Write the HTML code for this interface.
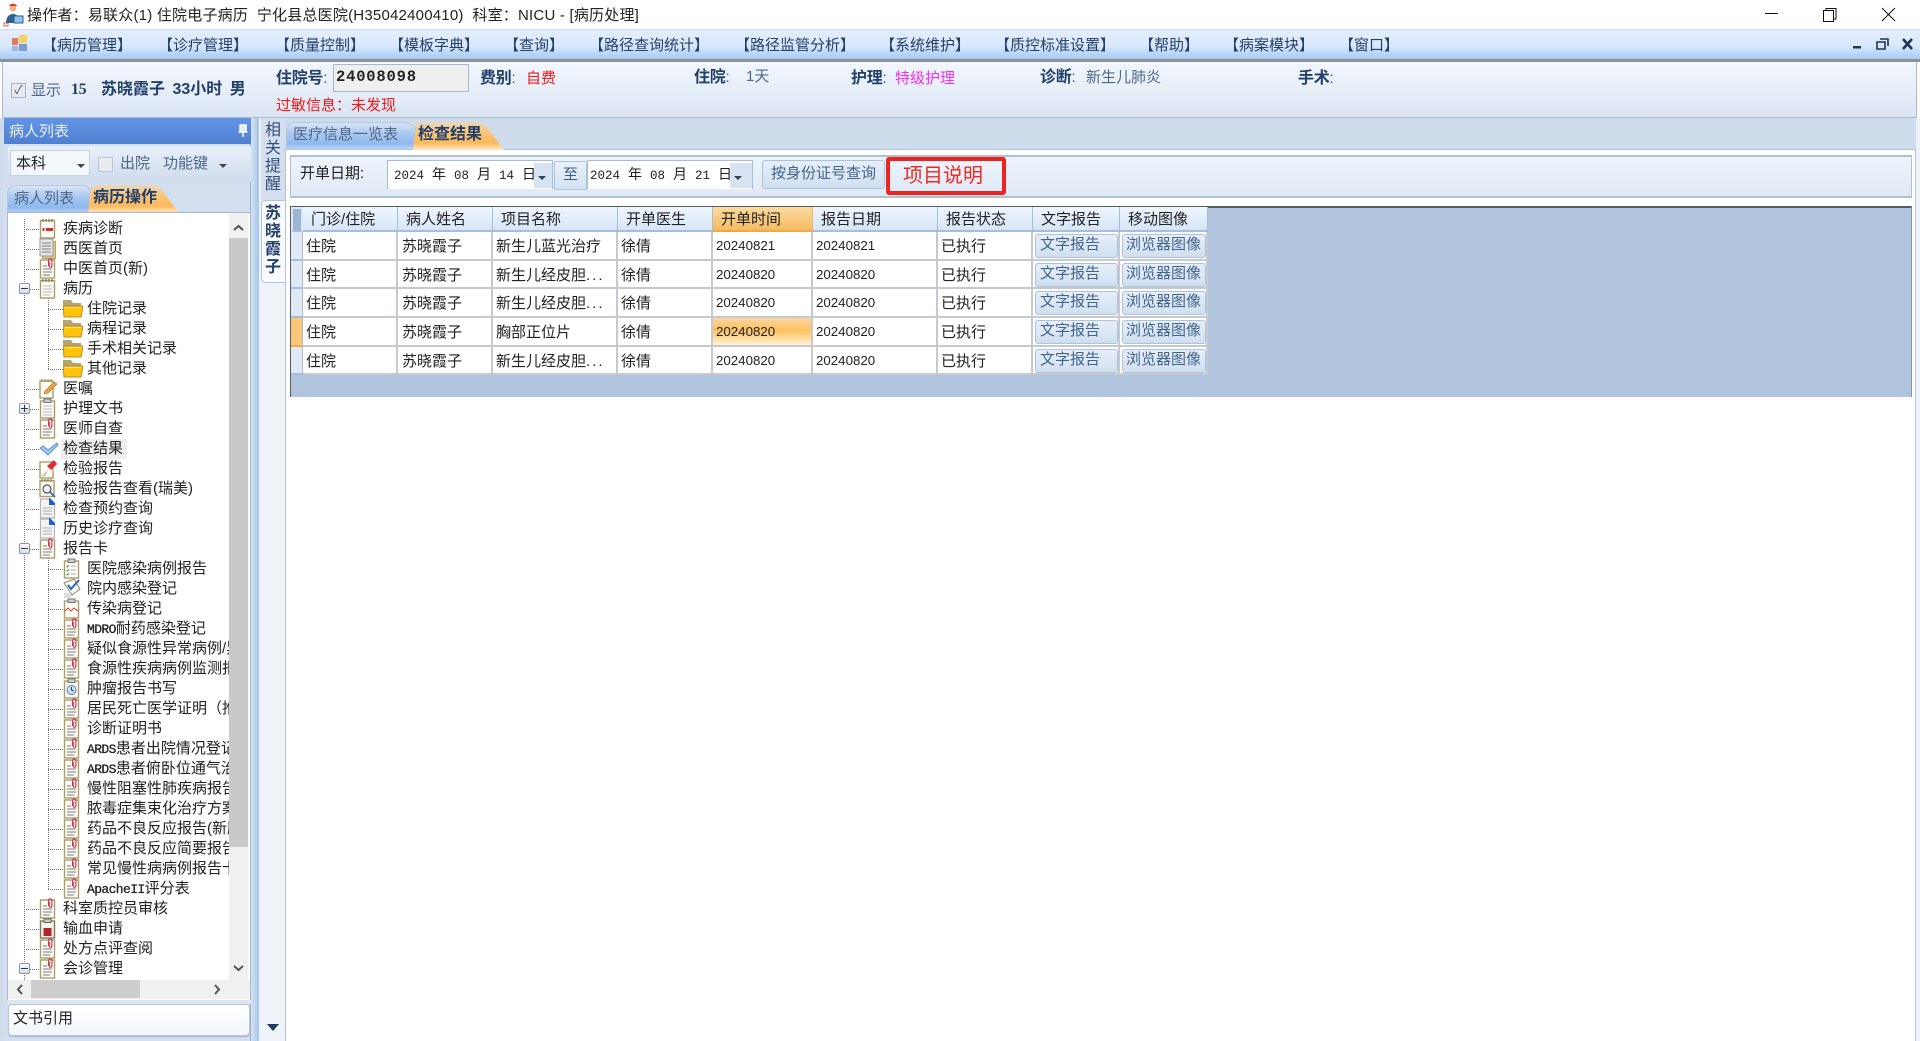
<!DOCTYPE html>
<html lang="zh-CN"><head><meta charset="utf-8"><title>病历处理</title>
<style>
html,body{margin:0;padding:0;width:1920px;height:1041px;overflow:hidden;background:#fff}
body{position:relative;font-family:"Liberation Sans","Noto Sans CJK SC",sans-serif;font-size:15px;color:#222;filter:blur(.3px)}
.x{position:absolute;box-sizing:border-box}
.t{position:absolute;white-space:nowrap;line-height:20px}
.b{font-weight:700}
.navy{color:#23406a}
.s{color:#4f6789}
.m{font-family:"Liberation Mono","Noto Sans CJK SC",monospace;font-size:12.5px;word-spacing:.5px}
.m span{font-size:14px}
.r{position:absolute;left:0;width:229px;height:20px;line-height:20px;white-space:nowrap}
.r svg{position:absolute;top:-1px;width:17px;height:21px}
.r span{position:absolute;top:0}
.r::before{content:"";position:absolute;top:10px;width:15px;border-top:1px dotted #777}
.a svg{left:39px}.a span{left:63px}.a::before{left:24px}
.c svg{left:63px}.c span{left:87px}.c::before{left:48px}
.q{font-family:"Liberation Mono","Noto Sans CJK SC",monospace;font-size:13px;font-weight:400;letter-spacing:-.6px;-webkit-text-stroke:.3px #222}
.exp{position:absolute;left:19px;width:11px;height:11px;box-sizing:border-box;border:1px solid #8a97a8;border-radius:2px;background:linear-gradient(#fff,#d5dbe6);z-index:2}
.exp::before{content:"";position:absolute;left:1px;top:4px;width:7px;height:1px;background:#334}
.exp.p::after{content:"";position:absolute;left:4px;top:1px;width:1px;height:7px;background:#334}
table{position:absolute;left:291px;top:207px;border-collapse:separate;border-spacing:0;table-layout:fixed;width:917px;background:#fff}
th,td{box-sizing:border-box;padding:0;white-space:nowrap;overflow:hidden;text-align:left;font-weight:400}
th{height:25px;padding-left:8px;background:linear-gradient(#eff6fe,#d6e5f7);border-right:1px solid #a7bedb;border-bottom:2px solid #a7bedb}
th.on{background:linear-gradient(#fbdc9e,#f4bb63);border-bottom-color:#efa748;border-right-color:#e6b77a}
th.h{background:#9bb5d3;border:2px solid #dce8f6;border-bottom:2px solid #a7bedb}
td{padding-left:3px;border-right:2px solid #c6c9cd;border-bottom:2px solid #c6c9cd}
td:nth-child(3){padding-left:4px}
td.n{background:#e0e9f5;border-bottom-color:#a9bdd7;border-right:1px solid #a9bdd7}
td.n.sel{background:#fbc87a;border-bottom-color:#eea84e}
td.d{font-size:13.3px;padding-left:3px}
td.o{background:linear-gradient(#fbd6a4 0,#fdc15c 45%,#fff2d8 100%)}
td.k{padding:0 0 0 2px}
.btn{box-sizing:border-box;height:24px;line-height:20px;border:1px solid #adc3dc;border-radius:3px;background:linear-gradient(#e6eff9,#cfdff0);color:#44648c;text-align:left;padding-left:3px}
td.k:nth-child(9) .btn{padding-left:4px}
td.k .btn{margin-top:1px}
.dots{letter-spacing:2px}
.tabb{background:linear-gradient(#d8e5f5 0,#a9c8f0 40%,#8fb8ee 80%,#b9d4f5 100%);border:1px solid #b3c8e0;border-bottom:0;border-radius:9px 14px 0 0}
.tabo{background:linear-gradient(#e8d8c0 0,#f8c884 30%,#fdb95c 75%,#fee9cc 100%)}
</style></head><body>
<svg width="0" height="0" style="position:absolute">
<defs>
<symbol id="note" viewBox="0 0 17 21"><rect x="1.500" y="2.500" width="14" height="17.500" fill="#fffef8" stroke="#ab9c6c" stroke-width="1.400"/><path d="M4 1v3M7 1v3M10 1v3M13 1v3" stroke="#8e7438" stroke-width="1.200"/><path d="M4 8h9M4 11h9M4 14h9M4 17h7" stroke="#b5b5b5"/></symbol>
<symbol id="cal" viewBox="0 0 17 21"><rect x="1.500" y="2.500" width="14" height="17.500" fill="#fffef8" stroke="#ab9c6c" stroke-width="1.400"/><path d="M4 1v3M7 1v3M10 1v3M13 1v3" stroke="#8e7438" stroke-width="1.200"/><path d="M3.500 10h2v3h-2zM7 10h7v3H7z" fill="#d62b2b"/></symbol>
<symbol id="pages" viewBox="0 0 17 21"><rect x="3.500" y="3.500" width="13" height="17" fill="#d8c790" stroke="#b5a46e"/><rect x="1" y="1" width="13" height="17" fill="#e6e6e6" stroke="#999"/><path d="M3 5h9M3 8h9M3 11h9M3 14h9" stroke="#7e7e7e"/></symbol>
<symbol id="clip" viewBox="0 0 17 21"><rect x="1.500" y="2" width="14" height="18" fill="#fffef8" stroke="#ab9c6c" stroke-width="1.400"/><path d="M9.500 8V2.500a1.700 1.700 0 0 1 3.400 0V8a1.300 1.300 0 0 1-2.600 0V4" fill="none" stroke="#d23a55" stroke-width="1.200"/><path d="M4 8h4M4 11h9M4 14h9M4 17h7" stroke="#777"/></symbol>
<symbol id="folder" viewBox="0 0 20 21"><path d="M0 2h8l2 3h8v5H0z" fill="#b5a46e"/><path d="M1 19L0 8h20l-2 11z" fill="#ffc30a" stroke="#b98f22"/><path d="M2 9.500h16" stroke="#ffe680"/></symbol>
<symbol id="pen" viewBox="0 0 19 21"><rect x="1" y="3" width="13" height="17" fill="#fffef5" stroke="#ab9c6c" stroke-width="1.400"/><path d="M3 1v3M6 1v3M9 1v3M12 1v3" stroke="#8e7438"/><path d="M5 16l1-3 9-9 3 2-9 9z" fill="#f0a040" stroke="#b36a20" stroke-width=".6"/></symbol>
<symbol id="board" viewBox="0 0 17 21"><rect x="1.500" y="3" width="14" height="17" fill="#fffef8" stroke="#ab9c6c" stroke-width="1.400"/><rect x="5" y="1" width="7" height="3.500" fill="#ccc" stroke="#777"/><path d="M4 8h9M4 11h9M4 14h9M4 17h9" stroke="#b5b5b5"/></symbol>
<symbol id="check" viewBox="0 0 20 21"><path d="M1 10l3-2 5 4 9-7 1 2-10 10z" fill="#a3c9ee" stroke="#5a8fc8"/></symbol>
<symbol id="flag" viewBox="0 0 19 21"><rect x="1" y="4" width="13" height="16" fill="#fffef5" stroke="#ab9c6c" stroke-width="1.400"/><path d="M2 19l8-8-4 7z" fill="#bbb"/><path d="M8 8l7-6 3 4-6 6z" fill="#e22b2b"/></symbol>
<symbol id="search" viewBox="0 0 19 21"><rect x="1" y="2.500" width="14" height="16" fill="#fffef5" stroke="#ab9c6c" stroke-width="1.400"/><path d="M3 1v3M6 1v3M9 1v3M12 1v3" stroke="#8e7438"/><circle cx="8" cy="11" r="4" fill="#eef" stroke="#555" stroke-width="1.200"/><path d="M11 14l5 5" stroke="#3a7cc4" stroke-width="2"/></symbol>
<symbol id="doc" viewBox="0 0 17 21"><path d="M1.500 1h9l5 5v14h-14z" fill="#f4f4f4" stroke="#b5b5b5" stroke-width="1.200"/><path d="M10 0h1l5 5v2h-6z" fill="#1d62c8"/><path d="M4 10h9M4 13h9M4 16h9" stroke="#aaa"/></symbol>
<symbol id="lst" viewBox="0 0 17 21"><rect x="1.500" y="3" width="14" height="17" fill="#fffef8" stroke="#ab9c6c" stroke-width="1.400"/><rect x="5" y="1" width="7" height="3.500" fill="#ccc" stroke="#777"/><path d="M3.500 8l1 1 1.500-2M3.500 12l1 1 1.500-2M3.500 16l1 1 1.500-2" stroke="#3a9a60" fill="none"/><path d="M8 8h5M8 12h5M8 16h5" stroke="#aaa"/></symbol>
<symbol id="pck" viewBox="0 0 19 21"><path d="M1 5l10-4 6 10-8 6z" fill="#fffef5" stroke="#8a8a70"/><path d="M5 7l3 4 8-9" stroke="#2a62c0" stroke-width="2" fill="none"/><rect x="1" y="15" width="7" height="5" fill="#ddd"/></symbol>
<symbol id="wav" viewBox="0 0 17 21"><rect x="1.500" y="3" width="14" height="17" fill="#fffef8" stroke="#ab9c6c" stroke-width="1.400"/><rect x="5" y="1" width="7" height="3.500" fill="#ccc" stroke="#777"/><path d="M2 13l3-3 3 3 3-3 4 3" stroke="#e03030" fill="none"/></symbol>
<symbol id="clk" viewBox="0 0 17 21"><rect x="1.500" y="3" width="14" height="17" fill="#fffef8" stroke="#ab9c6c" stroke-width="1.400"/><rect x="5" y="1" width="7" height="3.500" fill="#ccc" stroke="#777"/><circle cx="8.500" cy="12" r="4.500" fill="#cde0f4" stroke="#4a80c0"/><path d="M8.500 9v3l2 1" stroke="#234" fill="none"/></symbol>
<symbol id="blood" viewBox="0 0 17 21"><rect x="1.500" y="3" width="14" height="17" fill="#f4f4f0" stroke="#8a7a50" stroke-width="1.400"/><rect x="5" y="1" width="7" height="3.500" fill="#ccc" stroke="#666"/><rect x="4.500" y="10" width="8" height="8" fill="#b5222a"/></symbol>
</defs></svg>

<!-- window title -->
<svg class="x" style="left:3px;top:3px" width="22" height="24" viewBox="0 0 22 24"><circle cx="10" cy="5" r="3.500" fill="#e9b48a"/><path d="M6 3c1-3 7-3 8 0z" fill="#d33"/><path d="M3 20c0-6 3-9 7-9s7 3 7 9z" fill="#33628f"/><rect x="11" y="13" width="9" height="7" fill="#8fc2ee" stroke="#2d5f93"/><path d="M1 20h4v3H1z" fill="#fff" stroke="#c33" stroke-width=".7"/></svg>
<div class="t" style="left:27px;top:6px;font-size:15px;letter-spacing:.21px">操作者：易联众(1) 住院电子病历&nbsp; 宁化县总医院(H35042400410)&nbsp; 科室：NICU - [病历处理]</div>
<svg class="x" style="left:1760px;top:5px" width="140" height="20" viewBox="0 0 140 20" fill="none" stroke="#111"><path d="M5 8.500h13"/><rect x="63.500" y="5.500" width="10" height="11"/><path d="M66 5.500V3.500h10v10.500h-2.500"/><path d="M122 3l13 13M135 3l-13 13"/></svg>

<!-- menu -->
<div class="x" style="left:0;top:29px;width:1920px;height:30px;background:linear-gradient(#e3eefc,#d9e8fb 55%,#a9cdf6);border-top:1px solid #cfdceb;border-bottom:1px solid #b2c8e0"></div>
<div class="x" style="left:0;top:59px;width:1920px;height:3px;background:#8c9299"></div>
<svg class="x" style="left:11px;top:35px" width="18" height="18" viewBox="0 0 18 18"><rect x="1" y="3" width="6" height="7" fill="#e8785a"/><rect x="8" y="0" width="8" height="8" fill="#f6d060"/><rect x="1" y="11" width="6" height="5" fill="#9ab8e0"/><rect x="8" y="9" width="8" height="7" fill="#7a9ad0"/></svg>
<div class="t navy" style="left:42px;top:36px">【病历管理】</div>
<div class="t navy" style="left:158px;top:36px">【诊疗管理】</div>
<div class="t navy" style="left:275px;top:36px">【质量控制】</div>
<div class="t navy" style="left:389px;top:36px">【模板字典】</div>
<div class="t navy" style="left:504px;top:36px">【查询】</div>
<div class="t navy" style="left:589px;top:36px">【路径查询统计】</div>
<div class="t navy" style="left:735px;top:36px">【路径监管分析】</div>
<div class="t navy" style="left:880px;top:36px">【系统维护】</div>
<div class="t navy" style="left:995px;top:36px">【质控标准设置】</div>
<div class="t navy" style="left:1139px;top:36px">【帮助】</div>
<div class="t navy" style="left:1224px;top:36px">【病案模块】</div>
<div class="t navy" style="left:1339px;top:36px">【窗口】</div>
<svg class="x" style="left:1850px;top:36px" width="66" height="16" viewBox="0 0 66 16"><path d="M3 10h8v2.500H3z" fill="#1d3554"/><path d="M27 6h8v7h-8zM30 3h8v7" fill="none" stroke="#1d3554" stroke-width="1.600"/><path d="M53 3l9 10M62 3l-9 10" stroke="#1d3554" stroke-width="2.600"/></svg>

<!-- info panel -->
<div class="x" style="left:0;top:118px;width:1920px;height:923px;background:#cfdcec"></div>
<div class="x" style="left:2px;top:62px;width:1915px;height:56px;background:linear-gradient(#f2f7fe,#dbe5f2);border:1px solid #a9bcd2;border-top:0"></div>
<div class="x" style="left:11px;top:83px;width:15px;height:15px;border:1px solid #a9b5c4;background:#e6e9ee;color:#556;font-size:12px;line-height:13px;text-align:center">✓</div>
<div class="t s" style="left:31px;top:81px">显示</div>
<div class="t b navy" style="left:71px;top:80px;font-size:16px;letter-spacing:-.4px;font-family:'Liberation Serif',serif">15</div>
<div class="t b navy" style="left:101px;top:80px;font-size:16px;word-spacing:3px">苏晓霞子 33小时 男</div>
<div class="t b navy" style="left:276px;top:69px;font-size:16px;letter-spacing:-.3px">住院号<span class="s" style="font-weight:400">:</span></div>
<div class="x" style="left:333px;top:64px;width:136px;height:28px;background:#efefef;border:1px solid #a9b8c9"></div>
<div class="t b" style="left:336px;top:67px;font-family:'Liberation Mono',monospace;font-size:15.5px;letter-spacing:.8px">24008098</div>
<div class="t b navy" style="left:480px;top:69px;font-size:16px;letter-spacing:-.3px">费别<span class="s" style="font-weight:400">:</span></div>
<div class="t" style="left:526px;top:69px;color:#f01818">自费</div>
<div class="t" style="left:276px;top:96px;color:#f01818">过敏信息：未发现</div>
<div class="t b navy" style="left:694px;top:68px;font-size:16px;letter-spacing:-.3px">住院<span class="s" style="font-weight:400">:</span></div>
<div class="t s" style="left:746px;top:67px">1天</div>
<div class="t b navy" style="left:851px;top:69px;font-size:16px;letter-spacing:-.3px">护理<span class="s" style="font-weight:400">:</span></div>
<div class="t" style="left:895px;top:69px;color:#f030f0">特级护理</div>
<div class="t b navy" style="left:1040px;top:68px;font-size:16px;letter-spacing:-.3px">诊断<span class="s" style="font-weight:400">:</span></div>
<div class="t s" style="left:1086px;top:68px">新生儿肺炎</div>
<div class="t b navy" style="left:1298px;top:69px;font-size:16px;letter-spacing:-.3px">手术<span class="s" style="font-weight:400">:</span></div>

<!-- left panel -->
<div class="x" style="left:3px;top:118px;width:248px;height:923px;background:#d3dfee;border-right:1px solid #9fb0c5"></div>
<div class="x" style="left:4px;top:118px;width:251px;height:26px;background:linear-gradient(#6494e6,#4f7fcf)"></div>
<div class="t" style="left:9px;top:122px;color:#e8f0fb">病人列表</div>
<svg class="x" style="left:237px;top:124px" width="12" height="14" viewBox="0 0 12 14"><path d="M3 1h6v7H3zM1.500 8h9M6 8v5" stroke="#fff" stroke-width="1.500" fill="#dfe8f6"/></svg>
<div class="x" style="left:8px;top:146px;width:244px;height:36px;background:linear-gradient(#e8f0fa,#cfdcec);border-radius:3px"></div>
<div class="x" style="left:10px;top:150px;width:80px;height:26px;background:#f4f7fb;border:1px solid #c4d2e2"></div>
<div class="t" style="left:16px;top:154px">本科</div>
<div class="x" style="left:77px;top:164px;border:4px solid transparent;border-top:4px solid #445"></div>
<div class="x" style="left:98px;top:157px;width:15px;height:15px;border:1px solid #b9c6d6;background:#e8ecf2"></div>
<div class="t s" style="left:120px;top:154px">出院</div>
<div class="t s" style="left:163px;top:154px">功能键</div>
<div class="x" style="left:219px;top:164px;border:4px solid transparent;border-top:4px solid #445"></div>
<!-- left tabs -->
<div class="x tabb" style="left:7px;top:185px;width:88px;height:28px"></div>
<div class="x tabo" style="left:88px;top:185px;width:91px;height:28px;clip-path:polygon(3px 3px,8px 0,66px 0,74px 5px,91px 28px,0 28px)"></div>
<div class="t s" style="left:14px;top:189px">病人列表</div>
<div class="t b navy" style="left:93px;top:188px;font-size:16px">病历操作</div>
<!-- tree -->
<div class="x" style="left:7px;top:212px;width:244px;height:788px;background:#fff;border:1px solid #a5b8cf;border-bottom:0"></div>
<div class="x" style="left:0;top:214px;width:229px;height:766px;overflow:hidden;clip-path:inset(0 0 0 8px)">
<div class="x" style="left:24px;top:5px;height:761px;border-left:1px dotted #777"></div>
<div class="x" style="left:48px;top:75px;height:80px;border-left:1px dotted #777"></div>
<div class="x" style="left:48px;top:335px;height:340px;border-left:1px dotted #777"></div>
<div class="exp" style="top:69px"></div>
<div class="exp p" style="top:189px"></div>
<div class="exp" style="top:329px"></div>
<div class="exp" style="top:749px"></div>
<div class="x" style="left:61px;top:225px;width:66px;height:20px;background:#efefef"></div>
<div class="r a" style="top:5px"><svg><use href="#cal"/></svg><span>疾病诊断</span></div>
<div class="r a" style="top:25px"><svg><use href="#pages"/></svg><span>西医首页</span></div>
<div class="r a" style="top:45px"><svg><use href="#clip"/></svg><span>中医首页(新)</span></div>
<div class="r a" style="top:65px"><svg><use href="#note"/></svg><span>病历</span></div>
<div class="r c" style="top:85px"><svg style="width:20px"><use href="#folder"/></svg><span>住院记录</span></div>
<div class="r c" style="top:105px"><svg style="width:20px"><use href="#folder"/></svg><span>病程记录</span></div>
<div class="r c" style="top:125px"><svg style="width:20px"><use href="#folder"/></svg><span>手术相关记录</span></div>
<div class="r c" style="top:145px"><svg style="width:20px"><use href="#folder"/></svg><span>其他记录</span></div>
<div class="r a" style="top:165px"><svg style="width:19px"><use href="#pen"/></svg><span>医嘱</span></div>
<div class="r a" style="top:185px"><svg><use href="#board"/></svg><span>护理文书</span></div>
<div class="r a" style="top:205px"><svg><use href="#clip"/></svg><span>医师自查</span></div>
<div class="r a" style="top:225px"><svg style="width:20px"><use href="#check"/></svg><span>检查结果</span></div>
<div class="r a" style="top:245px"><svg style="width:19px"><use href="#flag"/></svg><span>检验报告</span></div>
<div class="r a" style="top:265px"><svg style="width:19px"><use href="#search"/></svg><span>检验报告查看(瑞美)</span></div>
<div class="r a" style="top:285px"><svg><use href="#doc"/></svg><span>检查预约查询</span></div>
<div class="r a" style="top:305px"><svg><use href="#doc"/></svg><span>历史诊疗查询</span></div>
<div class="r a" style="top:325px"><svg><use href="#clip"/></svg><span>报告卡</span></div>
<div class="r c" style="top:345px"><svg><use href="#lst"/></svg><span>医院感染病例报告</span></div>
<div class="r c" style="top:365px"><svg style="width:19px"><use href="#pck"/></svg><span>院内感染登记</span></div>
<div class="r c" style="top:385px"><svg><use href="#wav"/></svg><span>传染病登记</span></div>
<div class="r c" style="top:405px"><svg><use href="#clip"/></svg><span><b class="q">MDRO</b>耐药感染登记</span></div>
<div class="r c" style="top:425px"><svg><use href="#clip"/></svg><span>疑似食源性异常病例/异常健康事件</span></div>
<div class="r c" style="top:445px"><svg><use href="#clip"/></svg><span>食源性疾病病例监测报告</span></div>
<div class="r c" style="top:465px"><svg><use href="#clk"/></svg><span>肿瘤报告书写</span></div>
<div class="r c" style="top:485px"><svg><use href="#clip"/></svg><span>居民死亡医学证明（推断）书</span></div>
<div class="r c" style="top:505px"><svg><use href="#clip"/></svg><span>诊断证明书</span></div>
<div class="r c" style="top:525px"><svg><use href="#clip"/></svg><span><b class="q">ARDS</b>患者出院情况登记表</span></div>
<div class="r c" style="top:545px"><svg><use href="#clip"/></svg><span><b class="q">ARDS</b>患者俯卧位通气治疗</span></div>
<div class="r c" style="top:565px"><svg><use href="#clip"/></svg><span>慢性阻塞性肺疾病报告卡</span></div>
<div class="r c" style="top:585px"><svg><use href="#clip"/></svg><span>脓毒症集束化治疗方案表</span></div>
<div class="r c" style="top:605px"><svg><use href="#clip"/></svg><span>药品不良反应报告(新版)</span></div>
<div class="r c" style="top:625px"><svg><use href="#clip"/></svg><span>药品不良反应简要报告表</span></div>
<div class="r c" style="top:645px"><svg><use href="#clip"/></svg><span>常见慢性病病例报告卡片</span></div>
<div class="r c" style="top:665px"><svg><use href="#clip"/></svg><span><b class="q">ApacheII</b>评分表</span></div>
<div class="r a" style="top:685px"><svg><use href="#clip"/></svg><span>科室质控员审核</span></div>
<div class="r a" style="top:705px"><svg><use href="#blood"/></svg><span>输血申请</span></div>
<div class="r a" style="top:725px"><svg><use href="#clip"/></svg><span>处方点评查阅</span></div>
<div class="r a" style="top:745px"><svg><use href="#clip"/></svg><span>会诊管理</span></div>
</div>
<!-- tree scrollbars -->
<div class="x" style="left:229px;top:213px;width:19px;height:767px;background:#f0f0f0"></div>
<div class="x" style="left:229px;top:238px;width:19px;height:609px;background:#c9c9c9"></div>
<svg class="x" style="left:232px;top:223px" width="13" height="10" viewBox="0 0 13 10"><path d="M2 7l4.500-4 4.500 4" fill="none" stroke="#555" stroke-width="2"/></svg>
<svg class="x" style="left:232px;top:963px" width="13" height="10" viewBox="0 0 13 10"><path d="M2 3l4.500 4 4.500-4" fill="none" stroke="#555" stroke-width="2"/></svg>
<div class="x" style="left:8px;top:980px;width:242px;height:19px;background:#f0f0f0"></div>
<div class="x" style="left:31px;top:980px;width:109px;height:18px;background:#cdcdcd"></div>
<svg class="x" style="left:15px;top:983px" width="10" height="13" viewBox="0 0 10 13"><path d="M7 2L3 6.500 7 11" fill="none" stroke="#555" stroke-width="2"/></svg>
<svg class="x" style="left:212px;top:983px" width="10" height="13" viewBox="0 0 10 13"><path d="M3 2l4 4.500L3 11" fill="none" stroke="#555" stroke-width="2"/></svg>
<div class="x" style="left:7px;top:1000px;width:244px;height:4px;background:#dbe6f2"></div>
<div class="x" style="left:8px;top:1004px;width:242px;height:32px;background:linear-gradient(#fff,#f2f6fb);border:1px solid #b6c7da;border-radius:4px;box-shadow:0 1px 1px #9fb2ca"></div>
<div class="t" style="left:13px;top:1009px;font-size:15px">文书引用</div>

<!-- vertical strip -->
<div class="x" style="left:251px;top:118px;width:8px;height:923px;background:linear-gradient(90deg,#d6e3f3,#a6c4ea)"></div>
<div class="x" style="left:259px;top:118px;width:26px;height:923px;background:#eef3fa"></div>
<div class="x" style="left:261px;top:118px;width:24px;height:82px;background:#d3dfee"></div>
<div class="x" style="left:261px;top:200px;width:25px;height:83px;background:#f8fafd;border:1px solid #b3c4d9;border-right:0;border-radius:4px 0 0 4px"></div>
<div class="x" style="left:264px;top:122px;width:18px;font-size:16px;line-height:18px;text-align:center;color:#33507a">相<br>关<br>提<br>醒</div>
<div class="x b navy" style="left:264px;top:205px;width:18px;font-size:16px;line-height:18px;text-align:center">苏<br>晓<br>霞<br>子</div>
<div class="x" style="left:267px;top:1024px;border:6px solid transparent;border-top:7px solid #1f3a63"></div>

<!-- right main -->
<div class="x" style="left:285px;top:149px;width:1631px;height:892px;background:#fff;border:1px solid #b3c4d9;border-bottom:0"></div>
<div class="x" style="left:1916px;top:118px;width:4px;height:923px;background:#edf2f9"></div>
<div class="x tabb" style="left:286px;top:122px;width:132px;height:27px"></div>
<div class="x tabo" style="left:413px;top:122px;width:91px;height:28px;clip-path:polygon(3px 3px,8px 0,66px 0,74px 5px,91px 28px,0 28px)"></div>
<div class="t s" style="left:293px;top:125px">医疗信息一览表</div>
<div class="t b navy" style="left:418px;top:125px;font-size:16px">检查结果</div>

<!-- toolbar -->
<div class="x" style="left:290px;top:155px;width:1622px;height:43px;background:linear-gradient(#edf4fd,#dfe9f5);border:1px solid #b0c0d3;border-width:2px 1px 2px 1px"></div>
<div class="t" style="left:300px;top:164px">开单日期:</div>
<div class="x" style="left:387px;top:160px;width:166px;height:29px;border:1px solid #a9bdd4;border-bottom:0;background:#fff"></div>
<div class="x" style="left:534px;top:163px;width:18px;height:25px;background:#d6e3f2"></div>
<div class="t m" style="left:394px;top:166px">2024 <span>年</span> 08 <span>月</span> 14 <span>日</span></div>
<div class="x" style="left:538px;top:176px;border:4px solid transparent;border-top:4px solid #345"></div>
<div class="x" style="left:554px;top:161px;width:33px;height:29px;background:linear-gradient(#e9f1fb,#d3e1f1);border:1px solid #aec2da;text-align:center;line-height:26px;color:#3b5a84;border-radius:2px">至</div>
<div class="x" style="left:587px;top:160px;width:166px;height:29px;border:1px solid #a9bdd4;border-bottom:0;background:#fff"></div>
<div class="x" style="left:730px;top:163px;width:22px;height:25px;background:#d6e3f2"></div>
<div class="t m" style="left:590px;top:166px">2024 <span>年</span> 08 <span>月</span> 21 <span>日</span></div>
<div class="x" style="left:734px;top:176px;border:4px solid transparent;border-top:4px solid #345"></div>
<div class="x btn" style="left:762px;top:160px;width:123px;height:29px;line-height:25px;text-align:center;padding:0">按身份证号查询</div>
<div class="x" style="left:886px;top:157px;width:120px;height:38px;border:4px solid #ec2420;border-radius:3px;background:linear-gradient(#edf4fd,#dfe9f5);color:#ea2a22;font-size:20px;line-height:30px;padding-left:13px">项目说明</div>

<!-- grid -->
<div class="x" style="left:290px;top:206px;width:1622px;height:191px;background:#b0c4de;border-top:2px solid #555c66;border-left:1px solid #555c66;border-right:1px solid #8a94a0"></div>
<table><colgroup><col style="width:12px"><col style="width:95px"><col style="width:95px"><col style="width:125px"><col style="width:95px"><col style="width:100px"><col style="width:125px"><col style="width:95px"><col style="width:87px"><col style="width:88px"></colgroup>
<thead><tr><th class="h"></th><th>门诊/住院</th><th>病人姓名</th><th>项目名称</th><th>开单医生</th><th class="on">开单时间</th><th>报告日期</th><th>报告状态</th><th>文字报告</th><th>移动图像</th></tr></thead>
<tbody>
<tr style="height:29px"><td class="n"></td><td>住院</td><td>苏晓霞子</td><td>新生儿蓝光治疗</td><td>徐倩</td><td class="d">20240821</td><td class="d">20240821</td><td>已执行</td><td class="k"><div class="btn">文字报告</div></td><td class="k"><div class="btn">浏览器图像</div></td></tr>
<tr style="height:28px"><td class="n"></td><td>住院</td><td>苏晓霞子</td><td>新生儿经皮胆<span class="dots">...</span></td><td>徐倩</td><td class="d">20240820</td><td class="d">20240820</td><td>已执行</td><td class="k"><div class="btn">文字报告</div></td><td class="k"><div class="btn">浏览器图像</div></td></tr>
<tr style="height:29px"><td class="n"></td><td>住院</td><td>苏晓霞子</td><td>新生儿经皮胆<span class="dots">...</span></td><td>徐倩</td><td class="d">20240820</td><td class="d">20240820</td><td>已执行</td><td class="k"><div class="btn">文字报告</div></td><td class="k"><div class="btn">浏览器图像</div></td></tr>
<tr style="height:29px"><td class="n sel"></td><td>住院</td><td>苏晓霞子</td><td>胸部正位片</td><td>徐倩</td><td class="d o">20240820</td><td class="d">20240820</td><td>已执行</td><td class="k"><div class="btn">文字报告</div></td><td class="k"><div class="btn">浏览器图像</div></td></tr>
<tr style="height:28px"><td class="n"></td><td>住院</td><td>苏晓霞子</td><td>新生儿经皮胆<span class="dots">...</span></td><td>徐倩</td><td class="d">20240820</td><td class="d">20240820</td><td>已执行</td><td class="k"><div class="btn">文字报告</div></td><td class="k"><div class="btn">浏览器图像</div></td></tr>
</tbody></table>
</body></html>
